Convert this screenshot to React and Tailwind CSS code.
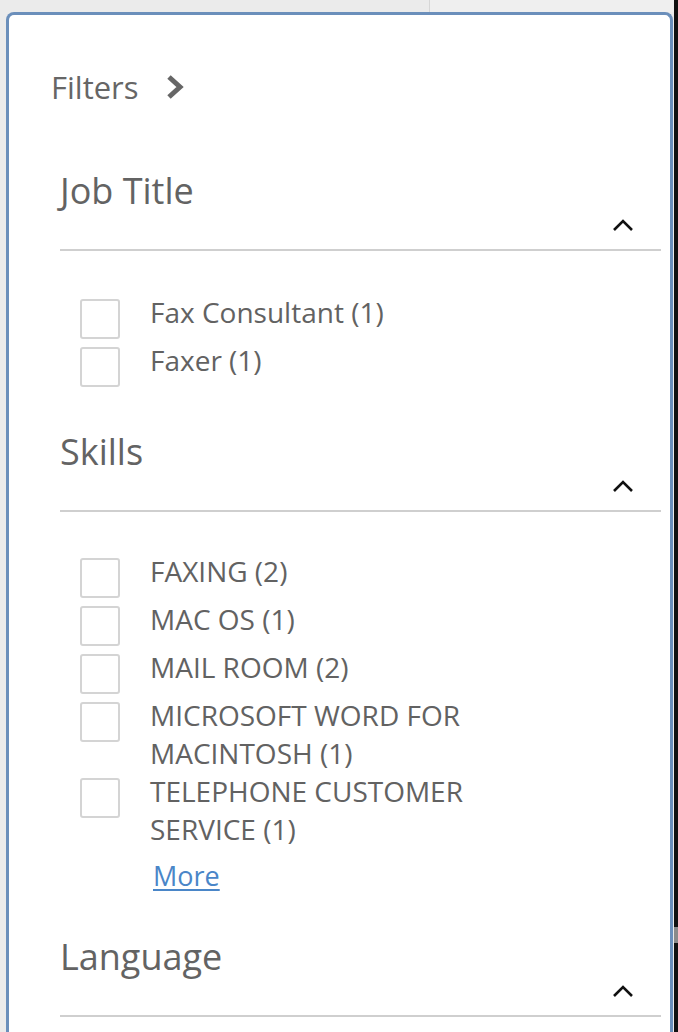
import React from "react";

const jobTitles = ["Fax Consultant (1)", "Faxer (1)"];
const skills = [
  "FAXING (2)",
  "MAC OS (1)",
  "MAIL ROOM (2)",
  "MICROSOFT WORD FOR MACINTOSH (1)",
  "TELEPHONE CUSTOMER SERVICE (1)",
];

function ChevronUp() {
  return (
    <svg width="22" height="14" viewBox="0 0 22 14" className="mt-[5px] mr-[27px]">
      <path d="M2 12 L11 3 L20 12" fill="none" stroke="#111" strokeWidth="2.6" />
    </svg>
  );
}

function SectionHeader({ title }) {
  return (
    <div className="mr-[9px] border-b-2 border-[#cfcfcf]">
      <h2 className="text-[36px] leading-[44px] text-[#636363]">{title}</h2>
      <div className="flex h-[36px] justify-end">
        <ChevronUp />
      </div>
    </div>
  );
}

function CheckRow({ label }) {
  return (
    <li className="flex min-h-[48px] items-start">
      <span className="mt-[6px] ml-[20px] h-[40px] w-[40px] shrink-0 rounded-[3px] border-2 border-[#d4d4d4] bg-white" />
      <span className="ml-[30px] w-[330px] text-[28px] leading-[38px] text-[#626262]">{label}</span>
    </li>
  );
}

export default function App() {
  return (
    <div className="flex h-[1032px] overflow-hidden bg-[#ebebeb]" style={{ fontFamily: '"Open Sans", "Noto Sans", sans-serif' }}>
      <div className="flex flex-1 flex-col">
        <div className="flex h-[12px] shrink-0">
          <div className="w-[430px] border-r border-[#d6d6d6]" />
          <div className="flex-1 bg-[#efefef]" />
        </div>
        <div className="ml-[6px] mr-[1px] flex-1 rounded-t-[8px] border-x-[3px] border-t-[3px] border-[#6b8fbb] bg-white">
          <div className="flex items-center pl-[42px] pt-[53px]">
            <span className="text-[31px] leading-[38px] text-[#666]">Filters</span>
            <svg width="20" height="24" viewBox="0 0 20 24" className="ml-[26px]">
              <path d="M4 2 L15 12 L4 22" fill="none" stroke="#666" strokeWidth="5" />
            </svg>
          </div>

          <section className="ml-[51px] mt-[63px]">
            <SectionHeader title="Job Title" />
            <ul className="mt-[42px]">
              {jobTitles.map((t) => (
                <CheckRow key={t} label={t} />
              ))}
            </ul>
          </section>

          <section className="ml-[51px] mt-[41px]">
            <SectionHeader title="Skills" />
            <ul className="mt-[40px]">
              {skills.map((t) => (
                <CheckRow key={t} label={t} />
              ))}
            </ul>
            <a href="#" className="ml-[93px] mt-[9px] block text-[27px] leading-[38px] text-[#4a86c8] underline underline-offset-[3px]">
              More
            </a>
          </section>

          <section className="ml-[51px] mt-[40px]">
            <SectionHeader title="Language" />
          </section>
        </div>
      </div>
      <div className="flex w-[4px] shrink-0 flex-col bg-[#111]">
        <div className="h-[927px]" />
        <div className="h-[16px] bg-[#8a8a8a]" />
      </div>
    </div>
  );
}
